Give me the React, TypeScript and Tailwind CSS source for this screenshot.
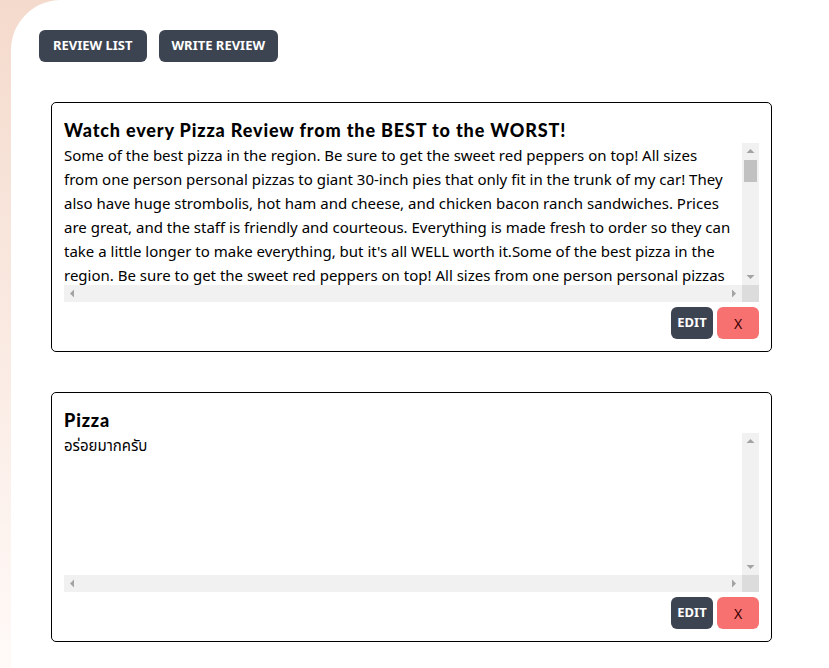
import { useState } from 'react';

const longText =
  "Some of the best pizza in the region. Be sure to get the sweet red peppers on top! All sizes from one person personal pizzas to giant 30-inch pies that only fit in the trunk of my car! They also have huge strombolis, hot ham and cheese, and chicken bacon ranch sandwiches. Prices are great, and the staff is friendly and courteous. Everything is made fresh to order so they can take a little longer to make everything, but it's all WELL worth it.Some of the best pizza in the region. Be sure to get the sweet red peppers on top! All sizes from one person personal pizzas to giant 30-inch pies that only fit in the trunk of my car! They also have huge strombolis, hot ham and cheese, and chicken bacon ranch sandwiches. Prices are great, and the staff is friendly and courteous.";

const reviews = [
  { id: 1, title: 'Watch every Pizza Review from the BEST to the WORST!', body: longText, thumb: true },
  { id: 2, title: 'Pizza', body: 'อร่อยมากครับ', thumb: false },
];

// windows-like classic scrollbar arrows
function Arrow({ dir }: { dir: 'up' | 'down' | 'left' | 'right' }) {
  const pts = {
    up: '4,6 8,2 12,6',
    down: '4,2 8,6 12,2',
    left: '6,4 2,8 6,12',
    right: '2,4 6,8 2,12',
  }[dir];
  const vert = dir === 'up' || dir === 'down';
  return (
    <svg width={vert ? 17 : 8} height={vert ? 8 : 17} viewBox={vert ? '0 0 17 8' : '0 0 8 17'}>
      <polygon points={pts} fill="#a3a3a3" transform={vert ? 'translate(0.5,0)' : 'translate(0,0.5)'} />
    </svg>
  );
}

function ScrollBox({ children, thumb }: { children: React.ReactNode; thumb: boolean }) {
  return (
    <div className="grid grid-cols-[1fr_17px] grid-rows-[142px_17px] h-[159px]">
      <div className="overflow-hidden pr-[9px] text-[15px] leading-[24px] text-black [font-family:'Noto_Sans','Noto_Sans_Thai',sans-serif]">
        {children}
      </div>
      <div className="bg-[#f1f1f1] flex flex-col items-center justify-between pt-[4px] pb-[4px]">
        <div className="flex flex-col items-center">
          <Arrow dir="up" />
          {thumb && <div className="w-[13px] h-[22px] mt-[5px] bg-[#c1c1c1]" />}
        </div>
        <Arrow dir="down" />
      </div>
      <div className="bg-[#f1f1f1] flex items-center justify-between px-[4px]">
        <Arrow dir="left" />
        <Arrow dir="right" />
      </div>
      <div className="bg-[#dcdcdc]" />
    </div>
  );
}

function ReviewCard({ title, body, thumb }: { title: string; body: string; thumb: boolean }) {
  return (
    <div className="border border-black rounded-[5px] px-[12px] pt-[14px] h-[250px] flex flex-col">
      <h2 className="text-[18px] leading-[26px] font-black text-black tracking-[0.85px] [font-family:'Lato','Noto_Sans',sans-serif]">
        {title}
      </h2>
      <ScrollBox thumb={thumb}>{body}</ScrollBox>
      <div className="flex justify-end gap-[4px] mt-[5px]">
        <button className="h-[32px] w-[42px] rounded-[6px] bg-[#3d4451] text-white text-[13px] font-bold">EDIT</button>
        <button className="h-[32px] w-[42px] rounded-[6px] bg-[#f87171] text-[#3b0000] text-[14px]">X</button>
      </div>
    </div>
  );
}

export default function App() {
  const [tab, setTab] = useState('list');
  return (
    <div className="min-h-screen bg-gradient-to-b from-[#f4dacc] to-[#fffaf8] [font-family:'Noto_Sans',sans-serif]">
      <div className="ml-[11px] min-h-screen bg-white rounded-tl-[50px] pt-[30px] pl-[28px] pr-[57px]">
        <div className="flex gap-[12px]">
          <button
            onClick={() => setTab('list')}
            className="h-[32px] px-[14px] rounded-[6px] bg-[#3d4451] text-white text-[13px] font-bold"
          >
            REVIEW LIST
          </button>
          <button
            onClick={() => setTab('write')}
            className="h-[32px] px-[13px] rounded-[6px] bg-[#3d4451] text-white text-[13px] font-bold"
          >
            WRITE REVIEW
          </button>
        </div>
        <div className="mt-[40px] ml-[12px] flex flex-col gap-[40px]">
          {tab === 'list' &&
            reviews.map((r) => <ReviewCard key={r.id} title={r.title} body={r.body} thumb={r.thumb} />)}
        </div>
      </div>
    </div>
  );
}
